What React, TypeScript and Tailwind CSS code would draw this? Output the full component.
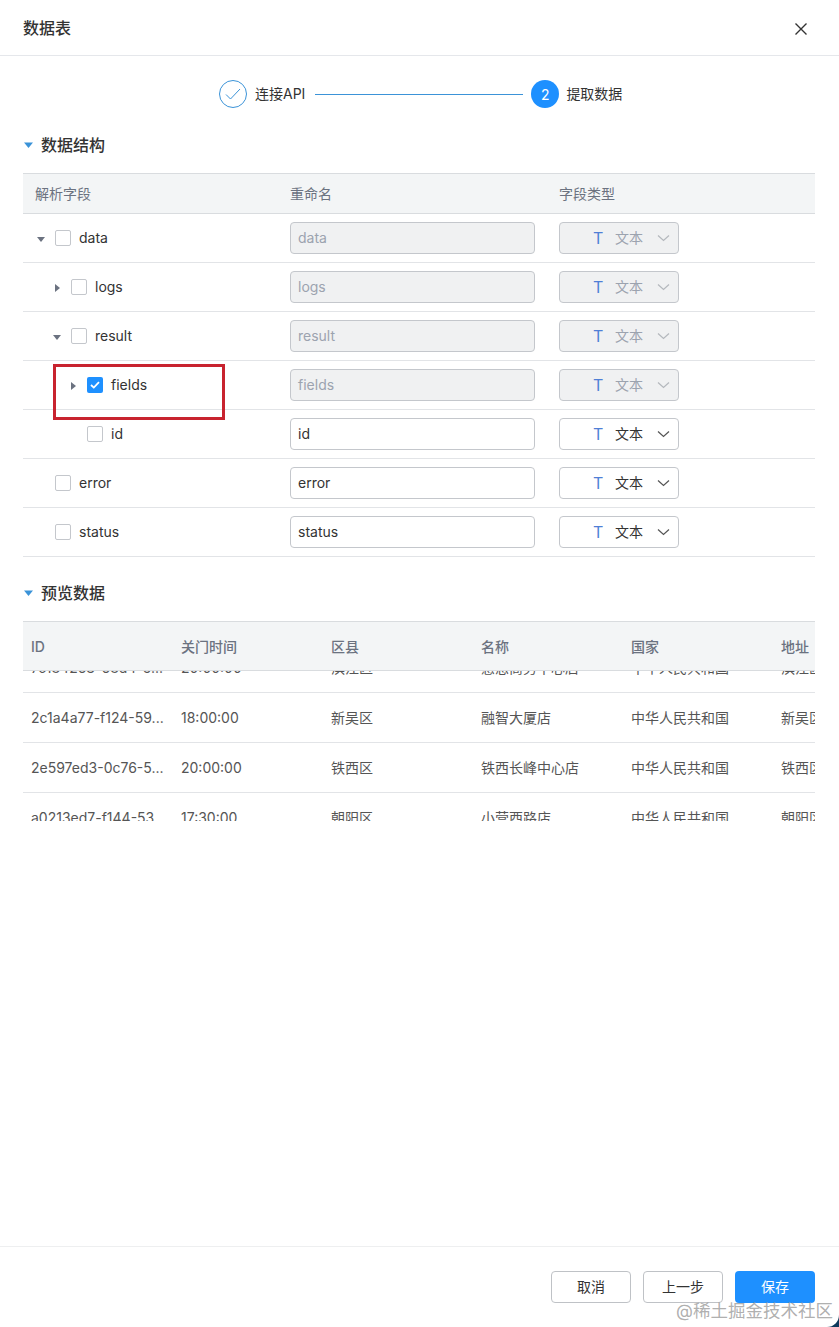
import React from 'react';

const fields = [
  { name: 'data', level: 0, caret: 'down', checked: false, disabled: true },
  { name: 'logs', level: 1, caret: 'right', checked: false, disabled: true },
  { name: 'result', level: 1, caret: 'down', checked: false, disabled: true },
  { name: 'fields', level: 2, caret: 'right', checked: true, disabled: true },
  { name: 'id', level: 2, caret: '', checked: false, disabled: false },
  { name: 'error', level: 0, caret: '', checked: false, disabled: false },
  { name: 'status', level: 0, caret: '', checked: false, disabled: false },
];

const levelPadding = ['pl-[12px]', 'pl-[28px]', 'pl-[44px]'];

const previewColumns = ['ID', '关门时间', '区县', '名称', '国家', '地址'];

const previewRows = [
  ['7c184263-68d4-5...', '20:00:00', '滨江区', '感恩商务中心店', '中华人民共和国', '滨江区'],
  ['2c1a4a77-f124-59...', '18:00:00', '新吴区', '融智大厦店', '中华人民共和国', '新吴区'],
  ['2e597ed3-0c76-5...', '20:00:00', '铁西区', '铁西长峰中心店', '中华人民共和国', '铁西区'],
  ['a0213ed7-f144-53...', '17:30:00', '朝阳区', '小营西路店', '中华人民共和国', '朝阳区'],
];

const SectionTitle: React.FC<{ title: string }> = ({ title }) => (
  <div className="flex items-center h-[24px]">
    <svg width="9" height="6" viewBox="0 0 9 6" className="ml-[24px] mr-[8px]">
      <path d="M0 0.5h9L4.5 6z" fill="#3b93d8" />
    </svg>
    <span className="text-[16px] font-medium text-[#333]">{title}</span>
  </div>
);

const Caret: React.FC<{ dir: string }> = ({ dir }) => (
  <span className="w-[20px] shrink-0 flex items-center justify-center">
    {dir === 'down' && (
      <svg width="8" height="5" viewBox="0 0 8 5" className="mr-[8px] mt-[3px]">
        <path d="M0 0h8L4 5z" fill="#6b7280" />
      </svg>
    )}
    {dir === 'right' && (
      <svg width="5" height="8" viewBox="0 0 5 8" className="mr-[8px] mt-[1px]">
        <path d="M0 0l5 4-5 4z" fill="#6b7280" />
      </svg>
    )}
  </span>
);

const Checkbox: React.FC<{ checked: boolean }> = ({ checked }) =>
  checked ? (
    <span className="w-[16px] h-[16px] shrink-0 rounded-[2px] bg-[#1e90ff] flex items-center justify-center">
      <svg width="10" height="8" viewBox="0 0 10 8">
        <path d="M1 4l2.8 2.6L9 1.2" fill="none" stroke="#fff" strokeWidth="1.8" />
      </svg>
    </span>
  ) : (
    <span className="w-[16px] h-[16px] shrink-0 rounded-[2px] border border-[#c4c7cc] bg-white" />
  );

const Chevron: React.FC<{ color: string }> = ({ color }) => (
  <svg width="13" height="8" viewBox="0 0 13 8">
    <path d="M1 1.5l5.5 5 5.5-5" fill="none" stroke={color} strokeWidth="1.2" />
  </svg>
);

export default function App() {
  return (
    <div className="h-[1327px] bg-[#0d3a5c] font-[Inter,'Noto_Sans_CJK_SC',sans-serif]">
      <div className="relative h-full bg-white rounded-br-[12px] overflow-hidden flex flex-col text-[14px] text-[#333]">
        <div className="h-[56px] shrink-0 border-b border-[#e5e7eb] flex items-center justify-between pl-[23px] pr-[31px]">
          <span className="text-[16px] font-medium text-[#333]">数据表</span>
          <svg width="14" height="14" viewBox="0 0 14 14" className="mt-[3px]">
            <path d="M1.5 1.5l11 11M12.5 1.5l-11 11" stroke="#333" strokeWidth="1.4" fill="none" />
          </svg>
        </div>

        <div className="flex-1">
          <div className="mt-[24px] h-[28px] flex items-center pl-[219px]">
            <span className="w-[28px] h-[28px] rounded-full border border-[#3b93d8] flex items-center justify-center">
              <svg width="16" height="12" viewBox="0 0 16 12">
                <path d="M1 6.5l4.5 4.5L15 1" fill="none" stroke="#3b93d8" strokeWidth="1" />
              </svg>
            </span>
            <span className="ml-[8px] -mt-px text-[#333]">连接API</span>
            <span className="ml-[10px] w-[208px] h-px bg-[#3b93d8]" />
            <span className="ml-[8px] w-[28px] h-[28px] rounded-full bg-[#1e90ff] text-white flex items-center justify-center">2</span>
            <span className="ml-[7px] -mt-px text-[#333]">提取数据</span>
          </div>

          <div className="mt-[25px]">
            <SectionTitle title="数据结构" />
          </div>

          <div className="mt-[16px] ml-[23px] mr-[24px]">
            <div className="h-[41px] grid grid-cols-[267px_269px_1fr] items-center bg-[#f3f5f6] border-y border-[#d9dcdf] text-[#6b7280]">
              <span className="pl-[12px]">解析字段</span>
              <span>重命名</span>
              <span>字段类型</span>
            </div>
            {fields.map((f) => (
              <div key={f.name} className="h-[49px] grid grid-cols-[267px_269px_1fr] items-center border-b border-[#e2e4e7]">
                <div className={`flex items-center ${levelPadding[f.level]}`}>
                  <Caret dir={f.caret} />
                  <Checkbox checked={f.checked} />
                  <span className="ml-[8px] -mt-px text-[#333]">{f.name}</span>
                </div>
                <div
                  className={`w-[245px] h-[32px] rounded-[4px] border border-[#c4c7cc] pl-[7px] pb-px flex items-center ${
                    f.disabled ? 'bg-[#f0f1f2] text-[#9ca3af]' : 'bg-white text-[#333]'
                  }`}
                >
                  {f.name}
                </div>
                <div
                  className={`w-[120px] h-[32px] rounded-[4px] border border-[#c4c7cc] flex items-center pl-[33px] pb-px ${
                    f.disabled ? 'bg-[#f0f1f2] text-[#9ca3af]' : 'bg-white text-[#333]'
                  }`}
                >
                  <span className="w-[22px] text-[16px] text-[#4f7fd6]">T</span>
                  <span className="w-[42px]">文本</span>
                  <Chevron color={f.disabled ? '#b4b8bd' : '#555'} />
                </div>
              </div>
            ))}
          </div>

          <div className="mt-[24px]">
            <SectionTitle title="预览数据" />
          </div>

          <div className="mt-[16px] ml-[23px] mr-[24px] overflow-hidden">
            <div className="w-[900px] h-[50px] flex items-center bg-[#f3f5f6] border-y border-[#d9dcdf] text-[#6b7280] font-medium">
              {previewColumns.map((c) => (
                <span key={c} className="w-[150px] pl-[8px]">{c}</span>
              ))}
            </div>
            <div className="h-[150px] overflow-hidden">
              <div className="w-[900px] -mt-[28px]">
                {previewRows.map((row) => (
                  <div key={row[0]} className="h-[50px] flex items-center border-b border-[#e2e4e7] text-[#555]">
                    {row.map((v, i) => (
                      <span key={i} className="w-[150px] pl-[8px] whitespace-nowrap">{v}</span>
                    ))}
                  </div>
                ))}
              </div>
            </div>
          </div>
        </div>

        <div className="h-[81px] shrink-0 border-t border-[#eeeff0] flex items-start justify-end gap-[12px] pt-[24px] pr-[24px]">
          <span className="w-[80px] h-[32px] rounded-[4px] border border-[#bfc2c6] flex items-center justify-center pb-px text-[#333]">取消</span>
          <span className="w-[80px] h-[32px] rounded-[4px] border border-[#bfc2c6] flex items-center justify-center pb-px text-[#333]">上一步</span>
          <span className="w-[80px] h-[32px] rounded-[4px] bg-[#1e90ff] flex items-center justify-center pb-px text-white">保存</span>
        </div>

        {/* highlight box drawn over the tree */}
        <div className="absolute left-[53px] top-[364px] w-[172px] h-[56px] border-[3px] border-[#c8232f]" />
        <span className="absolute right-[6px] bottom-[6px] text-[17.5px] leading-[20px] text-[#9a9a9a]/80 whitespace-nowrap">@稀土掘金技术社区</span>
      </div>
    </div>
  );
}
